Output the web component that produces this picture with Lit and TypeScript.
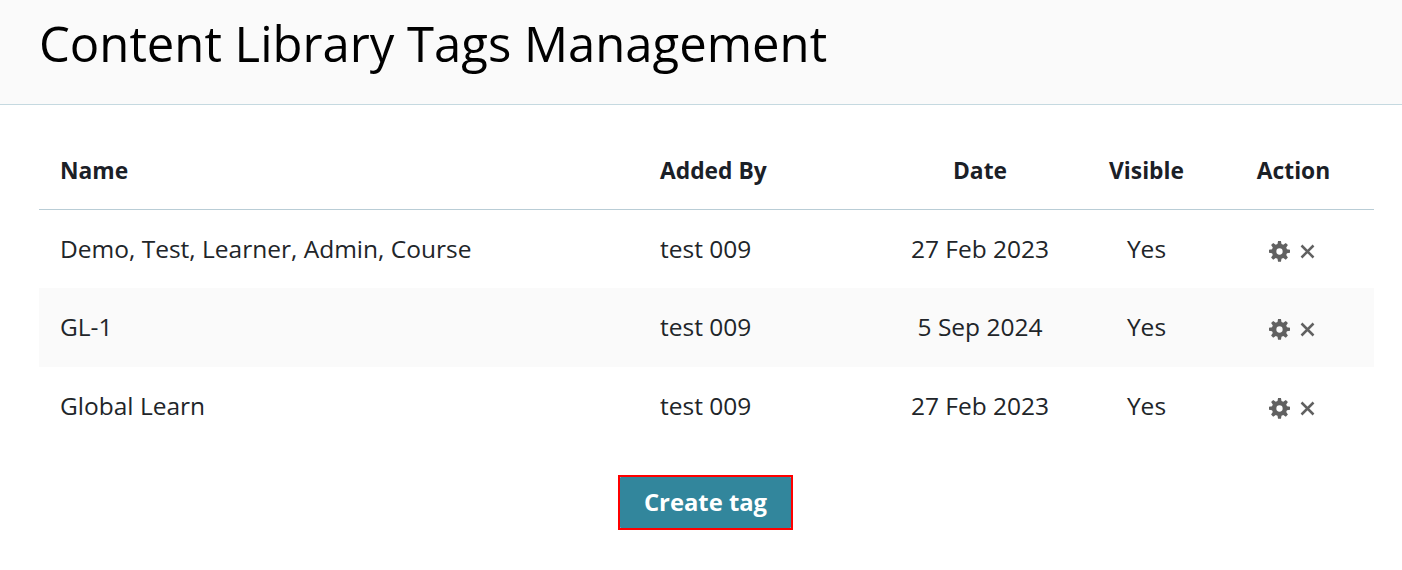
import { LitElement, html, css, svg } from "lit";
import { customElement } from "lit/decorators.js";

const rows = [
  { name: "Demo, Test, Learner, Admin, Course", by: "test 009", date: "27 Feb 2023", visible: "Yes" },
  { name: "GL-1", by: "test 009", date: "5 Sep 2024", visible: "Yes" },
  { name: "Global Learn", by: "test 009", date: "27 Feb 2023", visible: "Yes" },
];

const gear = svg`<path fill-rule="evenodd" d="M8.6 0h2.8l.5 2.8 1.7.7 2.4-1.7 2 2-1.6 2.4.7 1.7 2.9.5v2.8l-2.9.5-.7 1.7 1.6 2.4-2 2-2.4-1.7-1.7.7-.5 2.9H8.6l-.5-2.9-1.7-.7L4 17.8l-2-2 1.6-2.4-.7-1.7L0 11.2V8.4l2.9-.5.7-1.7L2 3.8l2-2 2.4 1.7 1.7-.7zM10 7a3 3 0 1 0 0 6 3 3 0 0 0 0-6z"/>`;

@customElement("app-root")
export class AppRoot extends LitElement {
  static styles = css`
    :host { display: block; font-family: "Open Sans", sans-serif; color: #212529; background: #fff; min-height: 570px; }
    .head { height: 104px; background: #fafafa; border-bottom: 1px solid #c5d9e0; padding-left: 39px; }
    h1 { margin: 0; font-size: 49px; font-weight: 400; line-height: 87px; color: #000; }
    .wrap { padding: 28px 28px 0 39px; }
    .row { display: grid; grid-template-columns: 600px 241px 200px 133px 161px; align-items: center; height: 78.33px; font-size: 24.5px; }
    .row > .t { padding-bottom: 2px; }
    .row.last > .t { padding-bottom: 1px; }
    .row.top { height: 76px; font-weight: 700; font-size: 22.8px; border-bottom: 1px solid #b9cdd6; color: #1b2027; }
    .row.alt { background: #fafafa; }
    .name, .by { padding-left: 21px; }
    .c { text-align: center; }
    .acts { display: flex; justify-content: center; align-items: center; gap: 10px; padding: 4px 4px 0 0; color: #616161; }
    .row.last .acts { padding-top: 6px; }
    .acts svg { display: block; fill: currentColor; }
    .x { stroke: currentColor; stroke-width: 2.5; fill: none; }
    .foot { display: flex; justify-content: center; padding: 30px 2px 0 0; }
    .frame { border: 2px solid #f00; background: #fff; display: flex; }
    button { width: 171px; height: 51px; background: #32869c; border: 0; border-radius: 1px; color: #fff; font: 700 23.8px "Open Sans", sans-serif; padding: 0 0 1px; }
  `;

  render() {
    return html`
      <div class="head"><h1>Content Library Tags Management</h1></div>
      <div class="wrap">
        <div class="row top">
          <div class="name t">Name</div><div class="by t">Added By</div>
          <div class="c t">Date</div><div class="c t">Visible</div><div class="c t">Action</div>
        </div>
        ${rows.map((r, i) => html`
          <div class="row ${i === 1 ? "alt" : ""} ${i === rows.length - 1 ? "last" : ""}">
            <div class="name t">${r.name}</div><div class="by t">${r.by}</div>
            <div class="c t">${r.date}</div><div class="c t">${r.visible}</div>
            <div class="acts">
              <svg width="21" height="21" viewBox="0 0 20 20">${gear}</svg>
              <svg class="x" width="15" height="15" viewBox="0 0 15 15"><path d="M1.5 1.5l12 12M13.5 1.5l-12 12"/></svg>
            </div>
          </div>`)}
        <div class="foot"><div class="frame"><button>Create tag</button></div></div>
      </div>
    `;
  }
}
